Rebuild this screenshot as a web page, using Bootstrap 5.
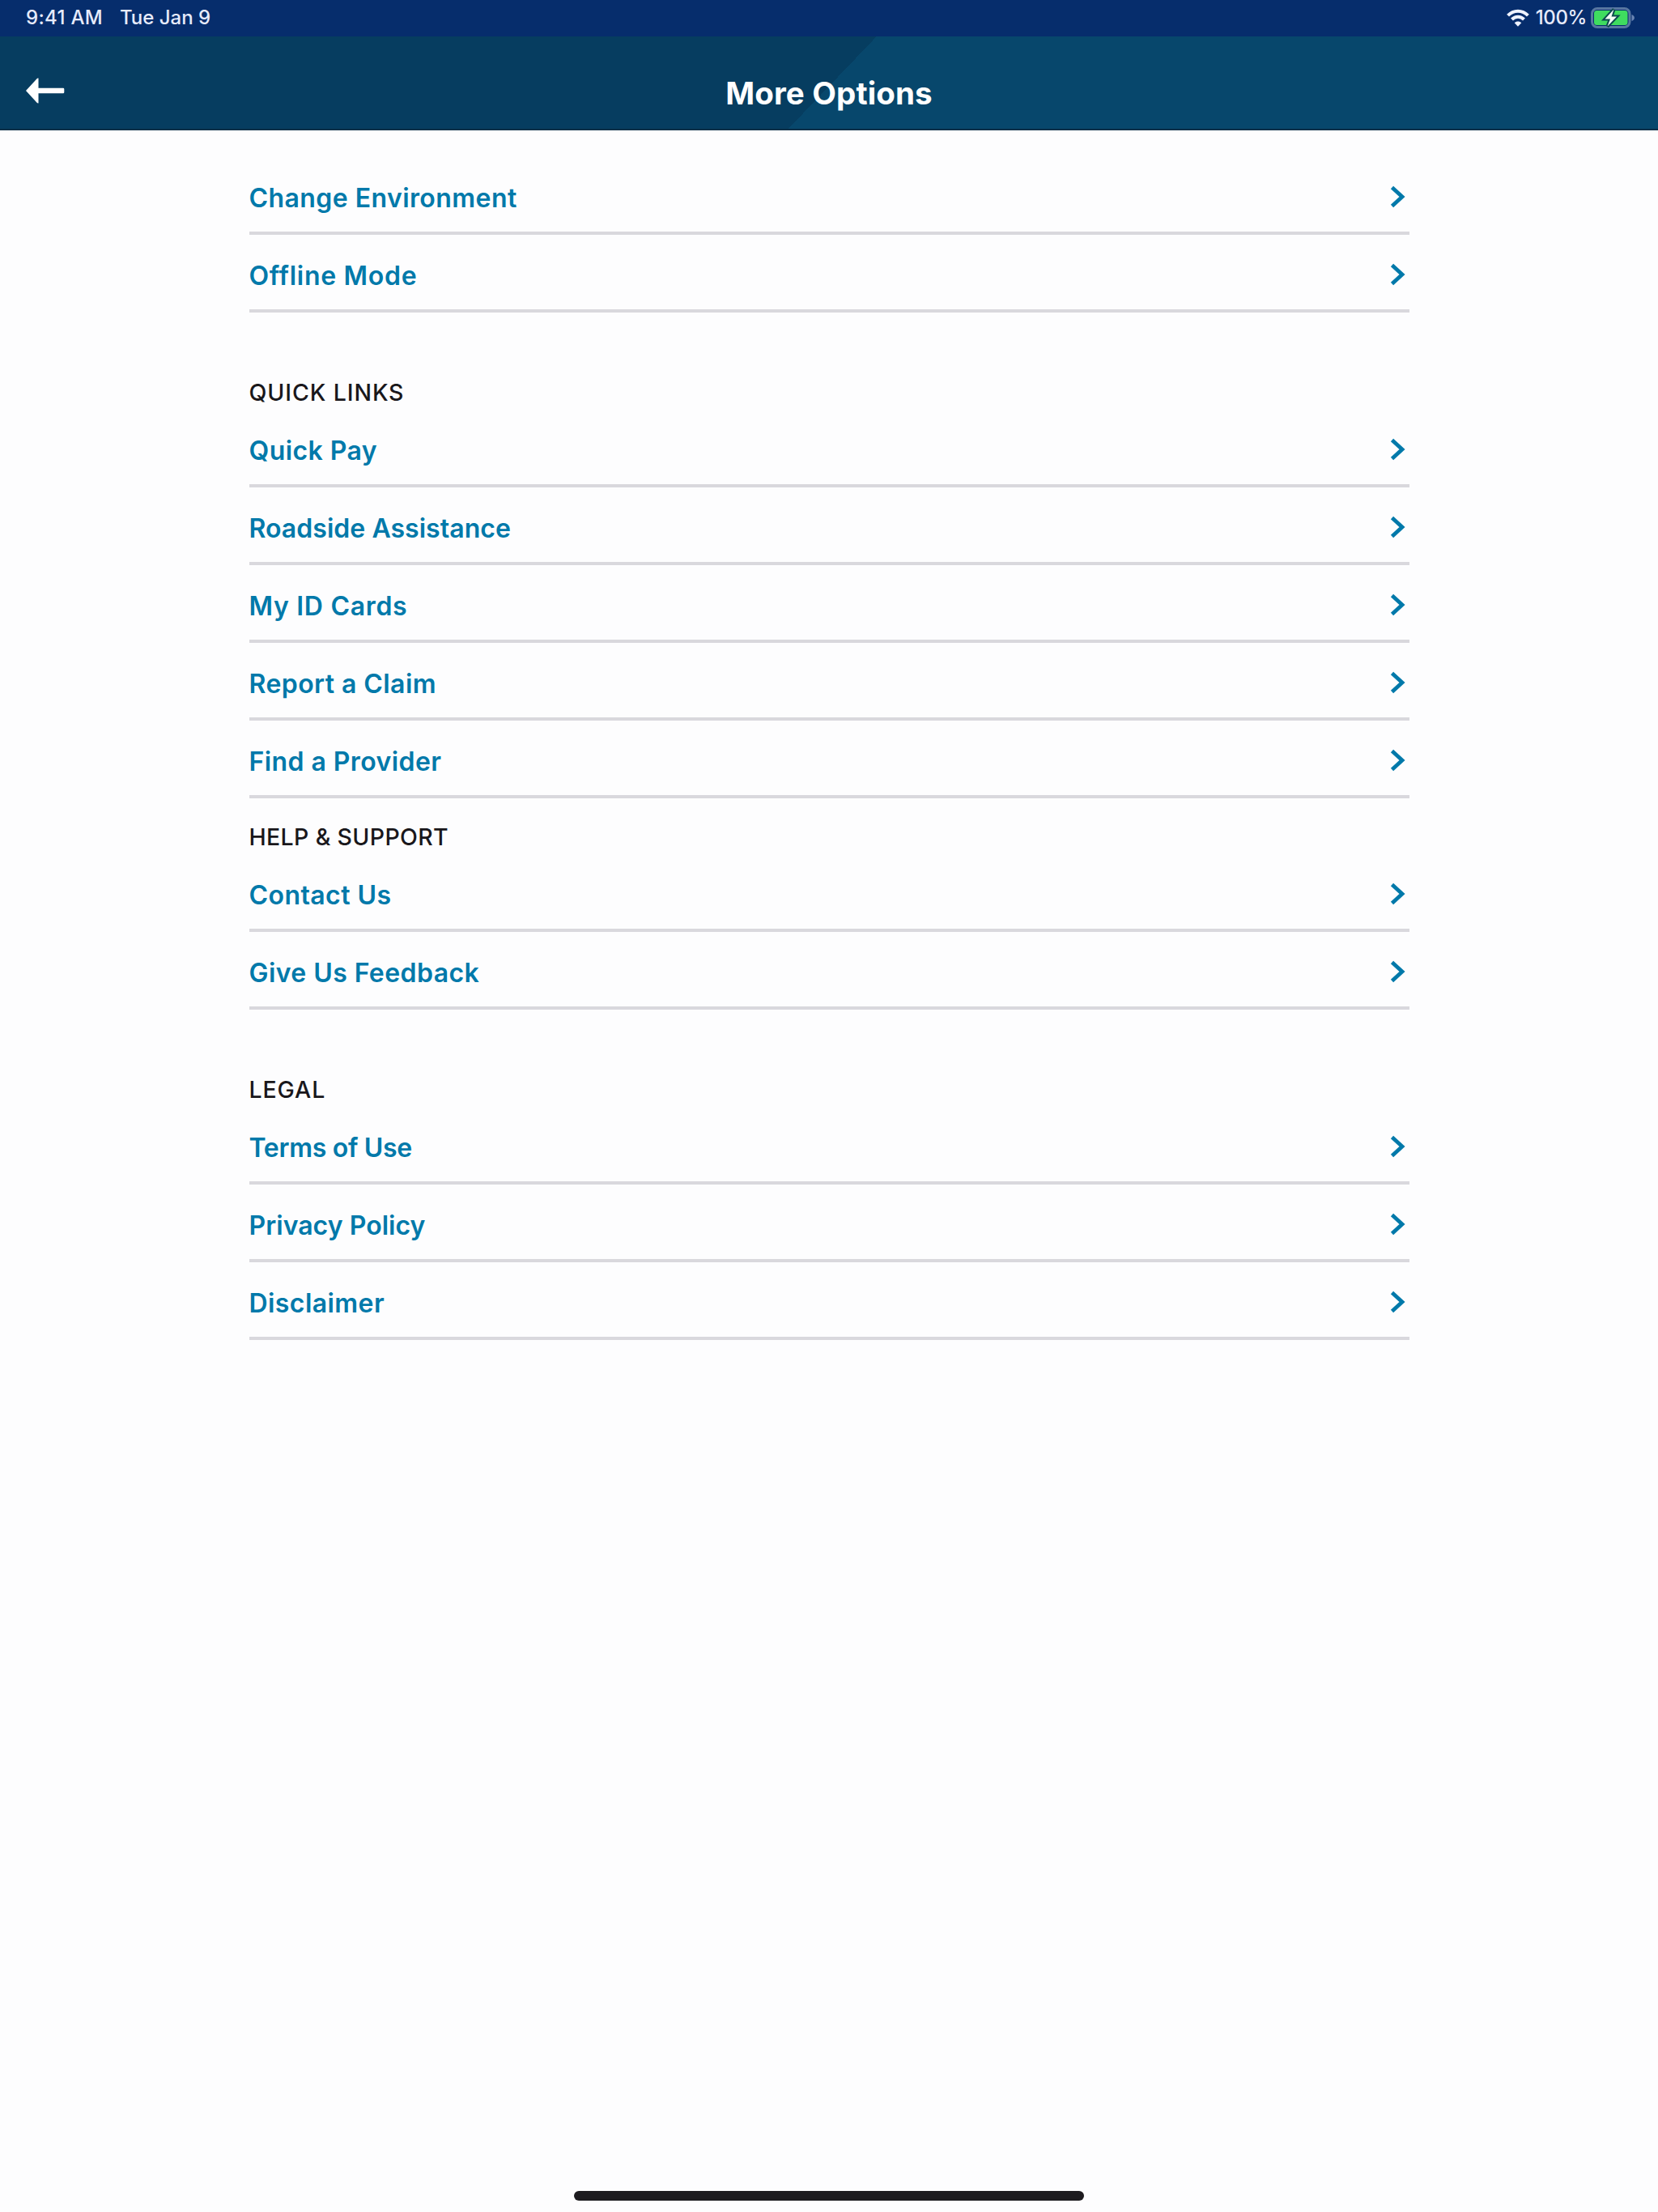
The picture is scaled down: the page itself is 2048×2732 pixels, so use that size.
<!DOCTYPE html>
<html lang="en">
<head>
<meta charset="utf-8">
<meta name="viewport" content="width=device-width, initial-scale=1">
<title>More Options</title>
<link href="https://cdn.jsdelivr.net/npm/bootstrap@5.3.0/dist/css/bootstrap.min.css" rel="stylesheet">
<style>
body{font-family:Inter,"Liberation Sans",sans-serif;background:#fdfdfe;min-height:2732px;color:#19171b}
svg{display:block;flex:none}
.status-bar{height:45px;background:#062d6c;color:#e6ebfb;font-size:24px;font-weight:500;line-height:43px;padding:0 29px 2px 32px}
.status-time{gap:21px;letter-spacing:.3px}
.status-date{letter-spacing:0}
.status-level{margin:0 5px 0 8px;letter-spacing:-.4px}
.app-header{height:116px;background:linear-gradient(133.7deg,#063d60 0 50.2%,#07476c 50.2% 100%);border-bottom:2px solid #0b2f48;padding:0 32px}
.header-side{width:50px}
.back-btn{line-height:0;margin-top:23px}
.app-title{font-size:38.5px;font-weight:700;color:#fff;margin:0;padding-top:26px;line-height:47px;letter-spacing:.15px}
.options{width:1433px;margin-left:307.5px;padding-top:33px}
.option-row{height:96px;border-bottom:4px solid #d9d8dd;color:#0079aa;font-size:32px;font-weight:600;padding:10px 5px 0 0;letter-spacing:.43px}
.option-row:hover{color:#0079aa}
.option-row svg{margin-top:-4px}
.track-wide{letter-spacing:.7px}
.track-flat{letter-spacing:.04px}
.track-tight{letter-spacing:-.3px}
.section-title{height:69px;font-size:28.5px;font-weight:500;line-height:34px;padding-top:31px;margin:0;letter-spacing:.9px}
.section-title.track-mid{letter-spacing:.35px}
.section-gap{margin-top:51px}
.home-bar{width:630px;height:12px;background:#1d1b1f;bottom:14px;left:709px}
</style>
</head>
<body class="position-relative">
<svg width="0" height="0" class="position-absolute" aria-hidden="true">
  <symbol id="chevron" viewBox="0 0 19 28"><path d="M2.5 2.5 15 14 2.5 25.5" fill="none" stroke="#0079aa" stroke-width="4.8"/></symbol>
</svg>
<div class="status-bar d-flex justify-content-between">
  <div class="status-time d-flex"><span>9:41 AM</span><span class="status-date">Tue Jan 9</span></div>
  <div class="d-flex align-items-center">
    <svg width="28" height="22" viewBox="0 0 28 22" fill="none" stroke="#eef2ff" stroke-width="4"><path d="M1.6 8.2C8.5 1 19.5 1 26.4 8.2"/><path d="M6.5 13C10.7 8.7 17.3 8.7 21.5 13"/><path d="M14 21.8 9.7 17.2C12 14.9 16 14.9 18.3 17.2Z" fill="#eef2ff" stroke="none"/></svg>
    <span class="status-level">100%</span>
    <svg width="54" height="26" viewBox="0 0 54 26"><path d="M50.500 9c4.500 1.500 4.500 6.500 0 8Z" fill="#6a86b4"/><rect x="1.5" y="1.5" width="46.5" height="23" rx="6.5" fill="none" stroke="#5877a0" stroke-width="3"/><rect x="4" y="4" width="41.5" height="18" rx="3.5" fill="#3fdc5f"/><path d="M28.5 2.5 17.5 14.5H24L20.5 23.5 32 11.5H25.5Z" fill="#f4fff6" stroke="#0b4a4f" stroke-width="4" paint-order="stroke"/></svg>
  </div>
</div>
<header class="app-header d-flex align-items-center justify-content-between">
  <div class="header-side"><a href="#" class="back-btn d-inline-block" aria-label="Back"><svg width="49" height="34" viewBox="0 0 49 34"><path d="M0 18 14 2.7 15.500 2.500V14.700H46Q47.300 14.700 47.300 16V20Q47.300 21.300 46 21.300H15.500V33.500L14 33.300Z" fill="#fff"/></svg></a></div>
  <h1 class="app-title">More Options</h1>
  <div class="header-side"></div>
</header>
<main class="options">
  <nav>
    <a href="#" class="option-row d-flex align-items-center justify-content-between text-decoration-none">Change Environment<svg width="19" height="28"><use href="#chevron"/></svg></a>
    <a href="#" class="option-row track-wide d-flex align-items-center justify-content-between text-decoration-none">Offline Mode<svg width="19" height="28"><use href="#chevron"/></svg></a>
  </nav>
  <h2 class="section-title section-gap">QUICK LINKS</h2>
  <nav>
    <a href="#" class="option-row d-flex align-items-center justify-content-between text-decoration-none">Quick Pay<svg width="19" height="28"><use href="#chevron"/></svg></a>
    <a href="#" class="option-row track-flat d-flex align-items-center justify-content-between text-decoration-none">Roadside Assistance<svg width="19" height="28"><use href="#chevron"/></svg></a>
    <a href="#" class="option-row track-wide d-flex align-items-center justify-content-between text-decoration-none">My ID Cards<svg width="19" height="28"><use href="#chevron"/></svg></a>
    <a href="#" class="option-row d-flex align-items-center justify-content-between text-decoration-none">Report a Claim<svg width="19" height="28"><use href="#chevron"/></svg></a>
    <a href="#" class="option-row d-flex align-items-center justify-content-between text-decoration-none">Find a Provider<svg width="19" height="28"><use href="#chevron"/></svg></a>
  </nav>
  <h2 class="section-title track-mid">HELP &amp; SUPPORT</h2>
  <nav>
    <a href="#" class="option-row d-flex align-items-center justify-content-between text-decoration-none">Contact Us<svg width="19" height="28"><use href="#chevron"/></svg></a>
    <a href="#" class="option-row d-flex align-items-center justify-content-between text-decoration-none">Give Us Feedback<svg width="19" height="28"><use href="#chevron"/></svg></a>
  </nav>
  <h2 class="section-title section-gap">LEGAL</h2>
  <nav>
    <a href="#" class="option-row track-tight d-flex align-items-center justify-content-between text-decoration-none">Terms of Use<svg width="19" height="28"><use href="#chevron"/></svg></a>
    <a href="#" class="option-row track-flat d-flex align-items-center justify-content-between text-decoration-none">Privacy Policy<svg width="19" height="28"><use href="#chevron"/></svg></a>
    <a href="#" class="option-row d-flex align-items-center justify-content-between text-decoration-none">Disclaimer<svg width="19" height="28"><use href="#chevron"/></svg></a>
  </nav>
</main>
<div class="home-bar position-absolute rounded-pill"></div>
<script src="https://cdn.jsdelivr.net/npm/bootstrap@5.3.0/dist/js/bootstrap.bundle.min.js"></script>
</body>
</html>
